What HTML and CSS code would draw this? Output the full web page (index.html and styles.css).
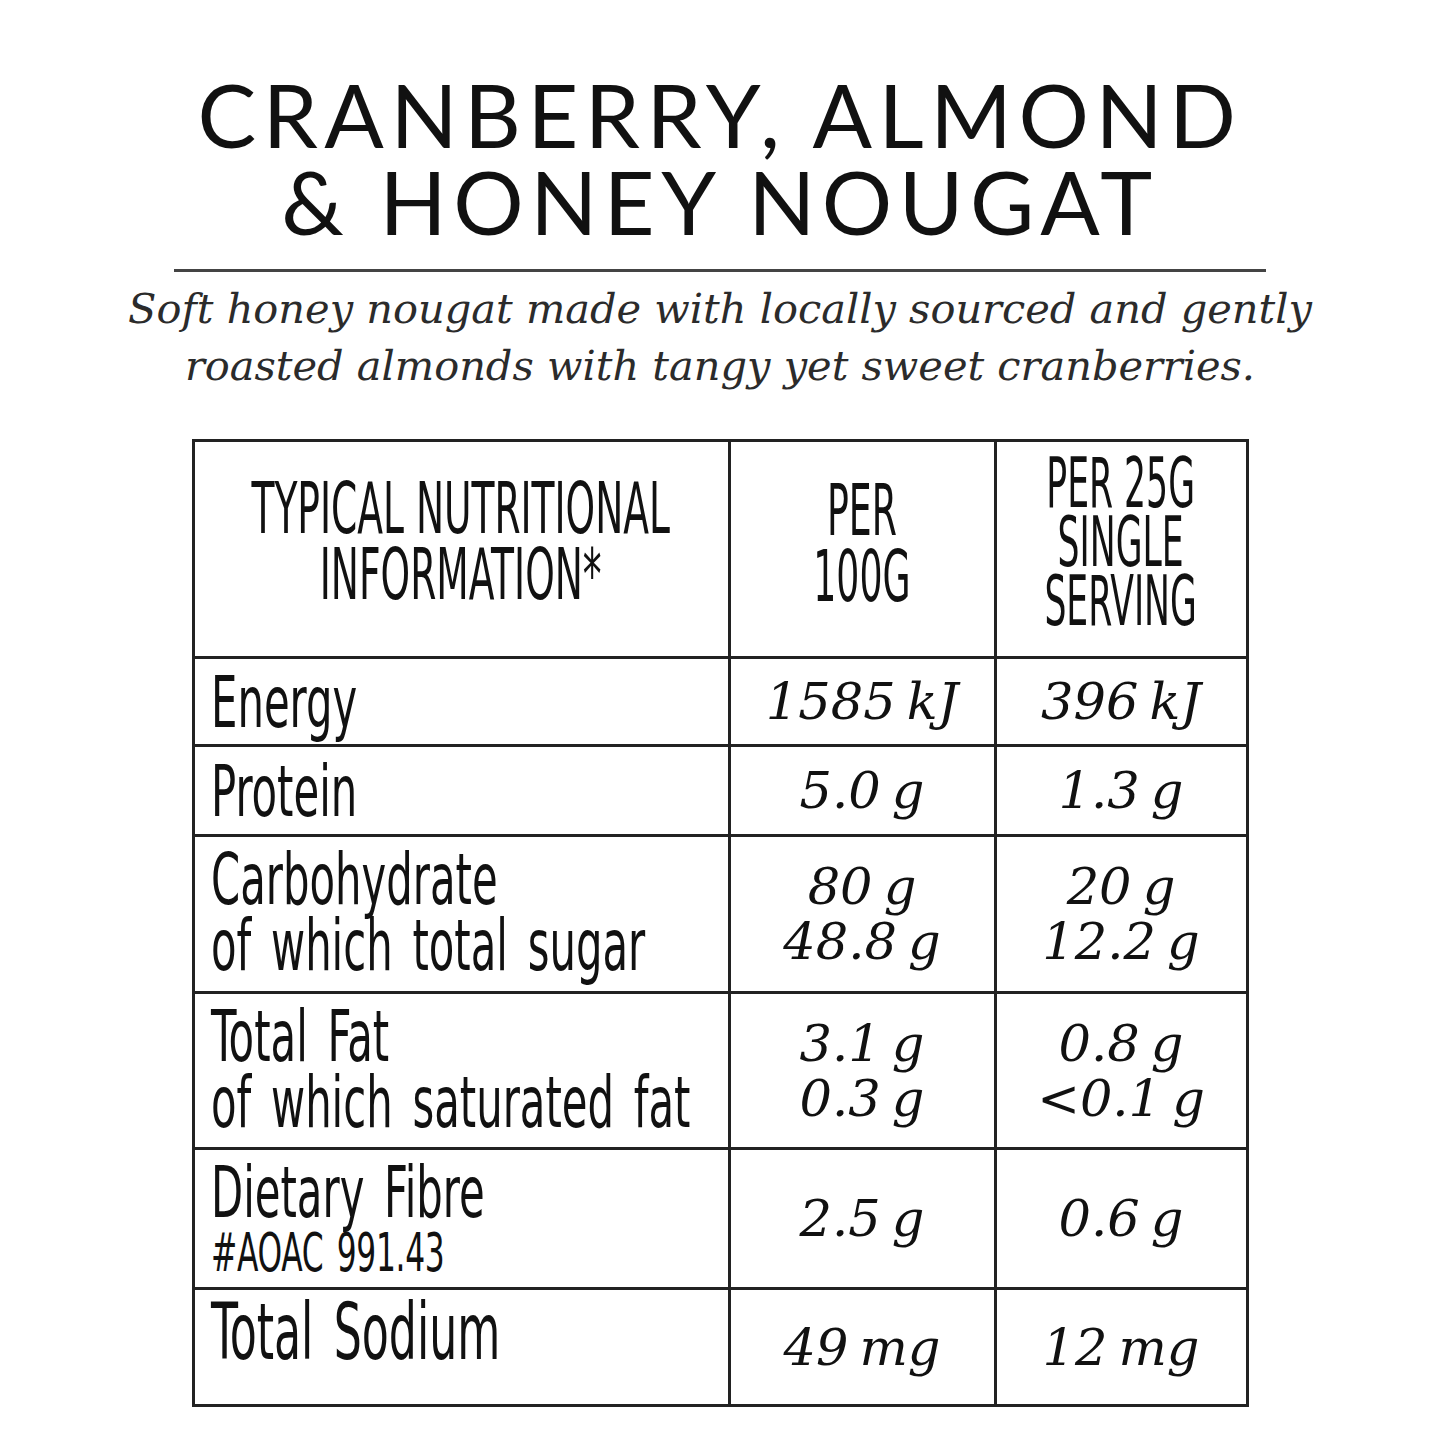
FILE: index.html
```html
<!DOCTYPE html>
<html lang="en">
<head>
<meta charset="utf-8">
<title>Cranberry, Almond &amp; Honey Nougat</title>
<link rel="stylesheet" href="styles.css">
</head>
<body>
<main class="page">
  <h1 class="title">CRANBERRY, ALMOND<br>&amp; HONEY NOUGAT</h1>
  <div class="rule"></div>
  <p class="desc">Soft honey nougat made with locally sourced and gently<br>roasted almonds with tangy yet sweet cranberries.</p>
  <table class="nutri">
    <colgroup>
      <col class="c-label">
      <col class="c-100">
      <col class="c-serv">
    </colgroup>
    <thead>
      <tr class="r-head">
        <th class="hcell"><div class="hwrap"><span class="cond head head-1">TYPICAL NUTRITIONAL<br>INFORMATION*</span></div></th>
        <th class="hcell"><div class="hwrap"><span class="cond head head-2">PER<br>100G</span></div></th>
        <th class="hcell"><div class="hwrap"><span class="cond head head-3">PER 25G<br>SINGLE<br>SERVING</span></div></th>
      </tr>
    </thead>
    <tbody>
      <tr class="r-energy">
        <td class="lbl mid"><span class="cond">Energy</span></td>
        <td class="val">1585 kJ</td>
        <td class="val">396 kJ</td>
      </tr>
      <tr class="r-protein">
        <td class="lbl mid"><span class="cond">Protein</span></td>
        <td class="val">5.0 g</td>
        <td class="val">1.3 g</td>
      </tr>
      <tr class="r-carb">
        <td class="lbl"><span class="cond">Carbohydrate<br>of which total sugar</span></td>
        <td class="val">80 g<br>48.8 g</td>
        <td class="val">20 g<br>12.2 g</td>
      </tr>
      <tr class="r-fat">
        <td class="lbl"><span class="cond">Total Fat<br>of which saturated fat</span></td>
        <td class="val">3.1 g<br>0.3 g</td>
        <td class="val">0.8 g<br>&lt;0.1 g</td>
      </tr>
      <tr class="r-fibre">
        <td class="lbl"><span class="cond">Dietary Fibre</span><span class="cond small">#AOAC 991.43</span></td>
        <td class="val">2.5 g</td>
        <td class="val">0.6 g</td>
      </tr>
      <tr class="r-sodium">
        <td class="lbl"><span class="cond big">Total Sodium</span></td>
        <td class="val">49 mg</td>
        <td class="val">12 mg</td>
      </tr>
    </tbody>
  </table>
</main>
</body>
</html>
```

FILE: styles.css
```css
html, body {
  margin: 0;
  padding: 0;
  background: #ffffff;
}

.page {
  width: 1440px;
  display: flex;
  flex-direction: column;
  align-items: center;
  padding-top: 71px;
  color: #111;
}

.title {
  margin: 0;
  font-family: Lato, "Liberation Sans", sans-serif;
  font-weight: 400;
  font-size: 88px;
  line-height: 87px;
  text-align: center;
  color: #111;
  letter-spacing: 6.5px;
}

.rule {
  width: 1092px;
  height: 3px;
  background: #444;
  margin-top: 24px;
}

.desc {
  margin: 8px 0 0 0;
  font-family: "DejaVu Serif", "Liberation Serif", serif;
  font-style: italic;
  font-size: 41.5px;
  line-height: 57px;
  text-align: center;
  color: #2b2b2b;
}

.nutri {
  margin-top: 45px;
  border-collapse: collapse;
  table-layout: fixed;
  width: 1054px;
  border: 3px solid #222;
}

.c-label { width: 536px; }
.c-100 { width: 266px; }
.c-serv { width: 252px; }

.nutri th,
.nutri td {
  border: 3px solid #222;
  padding: 0;
}

.cond {
  display: block;
  font-family: "DejaVu Sans Condensed", "DejaVu Sans", sans-serif;
  font-weight: 400;
  font-size: 72px;
  line-height: 66px;
  white-space: nowrap;
  transform: scaleX(0.645);
  transform-origin: left center;
  word-spacing: 10px;
  color: #111;
}

.r-head { height: 217px; }
.r-energy { height: 88px; }
.r-protein { height: 90px; }
.r-carb { height: 157px; }
.r-fat { height: 156px; }
.r-fibre { height: 140px; }
.r-sodium { height: 117px; }

.hcell {
  vertical-align: middle;
  font-weight: 400;
  padding-bottom: 18px !important;
}

.hwrap {
  display: flex;
  justify-content: center;
  text-align: center;
}

.head {
  transform-origin: center center;
  word-spacing: 0;
}

.head-1 {
  transform: scaleX(0.58);
  margin-top: 1px;
}

.head-2 {
  transform: scaleX(0.56);
  margin-top: 6px;
}

.head-3 {
  transform: scaleX(0.55);
  line-height: 59px;
  font-size: 70px;
  margin-top: 5px;
}

.lbl {
  text-align: left;
  vertical-align: top;
  padding: 9px 0 0 16px !important;
}

.lbl.mid {
  vertical-align: middle;
  padding-top: 0 !important;
}

.small {
  font-size: 54px;
  line-height: 56px;
  word-spacing: 6px;
  letter-spacing: -0.5px;
}

.big {
  font-size: 78px;
  transform: scaleX(0.63);
}

.val {
  text-align: center;
  vertical-align: middle;
  font-family: "DejaVu Serif", "Liberation Serif", serif;
  font-style: italic;
  font-size: 51px;
  line-height: 55px;
  word-spacing: -0.1em;
  color: #111;
}
```
